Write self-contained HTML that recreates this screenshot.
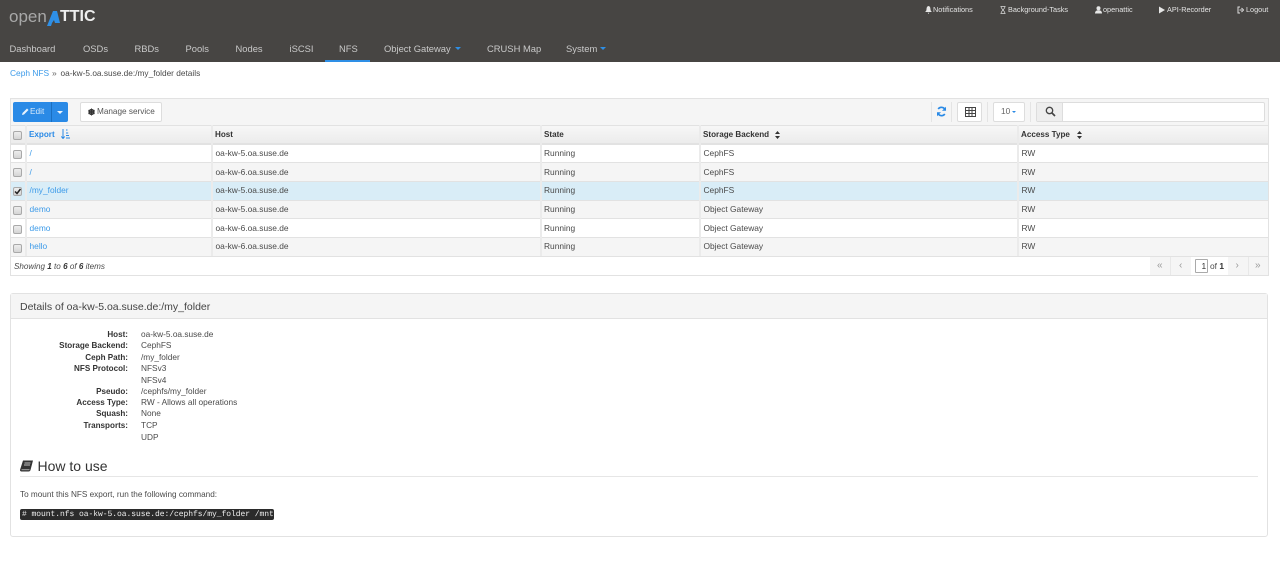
<!DOCTYPE html>
<html><head><meta charset="utf-8">
<style>
html,body{margin:0;padding:0;width:1280px;height:565px;overflow:hidden;background:#fff}
body{font-family:"Liberation Sans",sans-serif;font-size:8.4px;color:#4a4a4a;position:relative;filter:blur(.25px)}
.a,.t{position:absolute}
.t{white-space:nowrap;line-height:12px;height:12px}
.nav{font-size:9.4px;color:#c9c9c9;top:43px}
.top{font-size:7.3px;color:#e4e4e4;top:4px}
.lnk{color:#3d9be9}
.h{font-weight:bold;color:#333;font-size:8.1px}
.cb{position:absolute;left:13px;width:7px;height:7px;border:1px solid #a9a9a9;border-radius:2px;background:linear-gradient(#eee,#d5d5d5)}
.v{position:absolute;top:125px;width:2px;height:131px;background:#ebebeb}
.hl{position:absolute;left:11px;width:1257px;height:1px;background:#e2e2e2}
.row{position:absolute;left:11px;width:1257px}
.lab{font-weight:bold;color:#333;right:1152px;font-size:8.1px}
.val{left:141px;font-size:8.3px;color:#4a4a4a}
.btn{position:absolute;background:#fff;border:1px solid #ddd;border-radius:2px;box-sizing:border-box}
.sep{position:absolute;top:102px;width:1px;height:20px;background:#e4e4e4}
.pg{color:#999;font-size:10px}
</style></head><body>

<div class="a" style="left:0;top:0;width:1280px;height:62px;background:#474543"></div>
<div class="t" style="left:9px;top:7px;height:20px;line-height:20px;font-size:17px;color:#a8a8a8">open</div>
<svg class="a" style="left:46px;top:10px" width="16" height="17" viewBox="0 0 16 17"><path d="M1 16L7 1H11L14 13H9L8 10L6 13L5 16Z" fill="#2e8fe6"/></svg>
<div class="t" style="left:60px;top:7px;height:20px;line-height:20px;font-size:16px;font-weight:bold;color:#eee">TTIC</div>

<svg class="a" style="left:925px;top:6px" width="7" height="8" viewBox="0 0 7 8"><path d="M3.500 0C1.700.4 1.600 2 1.500 3.500 1.400 5 .6 5.500 0 6H7C6.400 5.500 5.600 5 5.500 3.500 5.400 2 5.300.4 3.500 0ZM2.700 6.700h1.600L3.500 8Z" fill="#e6e6e6"/></svg>
<div class="t top" style="left:933px">Notifications</div>
<svg class="a" style="left:1000px;top:6px" width="6" height="8" viewBox="0 0 6 8"><path d="M.5.500h5M.5 7.500h5M1 .5C1 3 5 5 5 7.500M5 .5C5 3 1 5 1 7.500" stroke="#ddd" stroke-width=".7" fill="none"/></svg>
<div class="t top" style="left:1008px">Background-Tasks</div>
<svg class="a" style="left:1095px;top:6px" width="7" height="8" viewBox="0 0 7 8"><circle cx="3.500" cy="2.200" r="2" fill="#e6e6e6"/><path d="M0 7.500C0 5 1.500 4.200 3.500 4.200S7 5 7 7.500Z" fill="#e6e6e6"/></svg>
<div class="t top" style="left:1103px">openattic</div>
<svg class="a" style="left:1159px;top:6px" width="6" height="8" viewBox="0 0 6 8"><path d="M0 .5L6 4 0 7.500Z" fill="#e6e6e6"/></svg>
<div class="t top" style="left:1167px">API-Recorder</div>
<svg class="a" style="left:1237px;top:6px" width="7" height="8" viewBox="0 0 7 8"><path d="M3 1H1V7H3M2.500 4H5M4.500 2L6.500 4 4.500 6" stroke="#ddd" stroke-width="1" fill="none"/></svg>
<div class="t top" style="left:1246px">Logout</div>

<div class="t nav" style="left:9.500px">Dashboard</div>
<div class="t nav" style="left:83px">OSDs</div>
<div class="t nav" style="left:134.500px">RBDs</div>
<div class="t nav" style="left:185.500px">Pools</div>
<div class="t nav" style="left:235.500px">Nodes</div>
<div class="t nav" style="left:289.500px">iSCSI</div>
<div class="t nav" style="left:339px">NFS</div>
<div class="a" style="left:325px;top:60px;width:45px;height:2px;background:#2e8fe6"></div>
<div class="t nav" style="left:384px">Object Gateway</div>
<div class="a" style="left:454.500px;top:47px;border:3px solid transparent;border-top:3px solid #2e8fe6"></div>
<div class="t nav" style="left:487px">CRUSH Map</div>
<div class="t nav" style="left:566px">System</div>
<div class="a" style="left:600px;top:47px;border:3px solid transparent;border-top:3px solid #2e8fe6"></div>

<div class="t lnk" style="left:10px;top:67px;font-size:8.400px">Ceph NFS</div>
<div class="t" style="left:52px;top:67px;font-size:8.500px;color:#666">»</div>
<div class="t" style="left:60.500px;top:67px;font-size:8.300px">oa-kw-5.oa.suse.de:/my_folder details</div>

<div class="a" style="left:10px;top:98px;width:1257px;height:176px;border:1px solid #e2e2e2;background:#fff"></div>
<div class="a" style="left:11px;top:99px;width:1257px;height:26px;background:#f5f5f5"></div>

<div class="a" style="left:13px;top:102px;width:55px;height:20px;background:#2a8ae6;border-radius:2px"></div>
<div class="a" style="left:51px;top:102px;width:1px;height:20px;background:#1b6fc0"></div>
<svg class="a" style="left:22px;top:108px" width="7" height="7" viewBox="0 0 7 7"><path d="M0 7L.5 5 5 .5 6.500 2 2 6.500Z" fill="#e8f2fc"/></svg>
<div class="t" style="left:30px;top:105px;font-size:8.300px;color:#d8eafa">Edit</div>
<div class="a" style="left:57px;top:111px;border:3px solid transparent;border-top:3px solid #e8f2fc"></div>
<div class="btn" style="left:80px;top:102px;width:82px;height:20px"></div>
<svg class="a" style="left:88px;top:107.500px" width="7" height="8" viewBox="0 0 7 8"><circle cx="3.500" cy="4" r="2.300" fill="none" stroke="#333" stroke-width="1.600"/><path d="M3.500.5V7.500M.4 2.200L6.600 5.800M.4 5.800L6.600 2.200" stroke="#333" stroke-width="1"/></svg>
<div class="t" style="left:97px;top:106px;font-size:8.200px;color:#555">Manage service</div>

<div class="sep" style="left:931px"></div><div class="sep" style="left:951px"></div>
<svg class="a" style="left:936px;top:106px" width="11" height="11" viewBox="0 0 11 11"><path d="M9.300 4.300A4 4 0 0 0 2.200 3M1.700 6.700A4 4 0 0 0 8.800 8" stroke="#2a8ae6" stroke-width="1.700" fill="none"/><path d="M10 .8V4.800H6ZM1 10.200V6.200H5Z" fill="#2a8ae6"/></svg>
<div class="btn" style="left:957px;top:102px;width:25px;height:20px"></div>
<svg class="a" style="left:964.500px;top:107px" width="11" height="10" viewBox="0 0 11 10"><path d="M.5.500h10v9H.5zM.5 3.500h10M.5 6.500h10M4 .5v9M7 .5v9" fill="none" stroke="#444" stroke-width="1"/></svg>
<div class="sep" style="left:987px"></div>
<div class="btn" style="left:993px;top:102px;width:32px;height:20px"></div>
<div class="t" style="left:1001px;top:105px;font-size:8.300px;color:#666">10</div>
<div class="a" style="left:1012px;top:110.500px;border:2.500px solid transparent;border-top:2.500px solid #2a8ae6"></div>
<div class="sep" style="left:1030px"></div>
<div class="btn" style="left:1036px;top:102px;width:229px;height:20px;border-color:#ddd"></div>
<div class="a" style="left:1037px;top:103px;width:26px;height:18px;background:#eee;border-right:1px solid #ddd;box-sizing:border-box"></div>
<svg class="a" style="left:1045px;top:106px" width="11" height="11" viewBox="0 0 11 11"><circle cx="4.500" cy="4.500" r="3.200" fill="none" stroke="#444" stroke-width="1.300"/><path d="M7 7L10 10" stroke="#444" stroke-width="1.700"/></svg>

<div class="a" style="left:11px;top:125px;width:1257px;height:19px;background:linear-gradient(#f7f7f7,#ebebeb)"></div>
<div class="row" style="top:144px;height:19px;background:#fff"></div>
<div class="row" style="top:163px;height:18px;background:#f5f5f5"></div>
<div class="row" style="top:181px;height:19px;background:#d9edf7"></div>
<div class="row" style="top:200px;height:19px;background:#f5f5f5"></div>
<div class="row" style="top:219px;height:18px;background:#fff"></div>
<div class="row" style="top:237px;height:19px;background:#f5f5f5"></div>

<div class="hl" style="top:125px"></div>
<div class="hl" style="top:143px;height:2px"></div>
<div class="hl" style="top:162px"></div>
<div class="hl" style="top:181px"></div>
<div class="hl" style="top:200px"></div>
<div class="hl" style="top:218px"></div>
<div class="hl" style="top:237px"></div>
<div class="hl" style="top:256px"></div>
<div class="v" style="left:25px"></div><div class="v" style="left:211px"></div><div class="v" style="left:540px"></div><div class="v" style="left:699px"></div><div class="v" style="left:1017px"></div>

<div class="cb" style="top:131px"></div>
<div class="cb" style="top:150px"></div>
<div class="cb" style="top:168px"></div>
<div class="cb" style="top:187px"></div>
<svg class="a" style="left:14px;top:187.500px" width="7" height="7" viewBox="0 0 7 7"><path d="M1 3.500L3 5.500 6.500 1" fill="none" stroke="#222" stroke-width="1.500"/></svg>
<div class="cb" style="top:206px"></div>
<div class="cb" style="top:225px"></div>
<div class="cb" style="top:244px"></div>

<div class="t lnk" style="left:29px;top:129px;font-weight:bold;color:#2a8ae6;font-size:8.100px">Export</div>
<svg class="a" style="left:61px;top:129px" width="9" height="10" viewBox="0 0 9 10"><path d="M2 0V9M.3 7.500L2 9.500 3.700 7.500" fill="none" stroke="#2a8ae6" stroke-width="1"/><path d="M5 1h1.500M5 4h2.200M5 6.500h3M5 9h4" stroke="#2a8ae6" stroke-width="1"/></svg>
<div class="t h" style="left:215px;top:129px">Host</div>
<div class="t h" style="left:544px;top:129px">State</div>
<div class="t h" style="left:703px;top:129px">Storage Backend</div>
<svg class="a" style="left:775px;top:130.500px" width="5" height="8" viewBox="0 0 5 8"><path d="M2.500 0L5 3H0ZM2.500 8L5 5H0Z" fill="#333"/></svg>
<div class="t h" style="left:1021px;top:129px">Access Type</div>
<svg class="a" style="left:1077px;top:130.500px" width="5" height="8" viewBox="0 0 5 8"><path d="M2.500 0L5 3H0ZM2.500 8L5 5H0Z" fill="#333"/></svg>

<div class="t lnk" style="left:29.500px;top:147px">/</div><div class="t" style="left:215.500px;top:147px">oa-kw-5.oa.suse.de</div><div class="t" style="left:544px;top:147px">Running</div><div class="t" style="left:703.500px;top:147px">CephFS</div><div class="t" style="left:1021.500px;top:147px">RW</div>
<div class="t lnk" style="left:29.500px;top:166px">/</div><div class="t" style="left:215.500px;top:166px">oa-kw-6.oa.suse.de</div><div class="t" style="left:544px;top:166px">Running</div><div class="t" style="left:703.500px;top:166px">CephFS</div><div class="t" style="left:1021.500px;top:166px">RW</div>
<div class="t lnk" style="left:29.500px;top:184px">/my_folder</div><div class="t" style="left:215.500px;top:184px">oa-kw-5.oa.suse.de</div><div class="t" style="left:544px;top:184px">Running</div><div class="t" style="left:703.500px;top:184px">CephFS</div><div class="t" style="left:1021.500px;top:184px">RW</div>
<div class="t lnk" style="left:29.500px;top:203px">demo</div><div class="t" style="left:215.500px;top:203px">oa-kw-5.oa.suse.de</div><div class="t" style="left:544px;top:203px">Running</div><div class="t" style="left:703.500px;top:203px">Object Gateway</div><div class="t" style="left:1021.500px;top:203px">RW</div>
<div class="t lnk" style="left:29.500px;top:222px">demo</div><div class="t" style="left:215.500px;top:222px">oa-kw-6.oa.suse.de</div><div class="t" style="left:544px;top:222px">Running</div><div class="t" style="left:703.500px;top:222px">Object Gateway</div><div class="t" style="left:1021.500px;top:222px">RW</div>
<div class="t lnk" style="left:29.500px;top:240px">hello</div><div class="t" style="left:215.500px;top:240px">oa-kw-6.oa.suse.de</div><div class="t" style="left:544px;top:240px">Running</div><div class="t" style="left:703.500px;top:240px">Object Gateway</div><div class="t" style="left:1021.500px;top:240px">RW</div>

<div class="t" style="left:14px;top:260.600px;font-style:italic;font-size:8.100px">Showing <b style="color:#333">1</b> to <b style="color:#333">6</b> of <b style="color:#333">6</b> items</div>

<div class="a" style="left:1150px;top:257px;width:41px;height:18px;background:#f5f5f5"></div>
<div class="a" style="left:1170px;top:257px;width:1px;height:18px;background:#e8e8e8"></div>
<div class="a" style="left:1228px;top:257px;width:40px;height:18px;background:#f5f5f5"></div>
<div class="a" style="left:1248px;top:257px;width:1px;height:18px;background:#e8e8e8"></div>
<div class="t pg" style="left:1157px;top:260px">«</div>
<div class="t pg" style="left:1179px;top:260px">‹</div>
<div class="t pg" style="left:1235.500px;top:260px">›</div>
<div class="t pg" style="left:1255px;top:260px">»</div>
<div class="a" style="left:1195px;top:259px;width:11px;height:12px;border:1px solid #aaa;border-radius:1px;background:#fff"></div>
<div class="t" style="left:1201.500px;top:260px;color:#333">1</div>
<div class="t" style="left:1210px;top:260px">of <b style="color:#333">1</b></div>

<div class="a" style="left:10px;top:293px;width:1258px;height:244px;border:1px solid #e2e2e2;border-radius:3px;box-sizing:border-box;background:#fff"></div>
<div class="a" style="left:11px;top:294px;width:1256px;height:24px;background:#f5f5f5;border-bottom:1px solid #e2e2e2"></div>
<div class="t" style="left:20px;top:299.500px;height:14px;line-height:14px;font-size:10.500px;color:#444">Details of oa-kw-5.oa.suse.de:/my_folder</div>

<div class="t lab" style="top:329px">Host:</div><div class="t val" style="top:328px">oa-kw-5.oa.suse.de</div>
<div class="t lab" style="top:340px">Storage Backend:</div><div class="t val" style="top:339px">CephFS</div>
<div class="t lab" style="top:352px">Ceph Path:</div><div class="t val" style="top:351px">/my_folder</div>
<div class="t lab" style="top:363px">NFS Protocol:</div><div class="t val" style="top:362px">NFSv3</div>
<div class="t val" style="top:374px">NFSv4</div>
<div class="t lab" style="top:386px">Pseudo:</div><div class="t val" style="top:385px">/cephfs/my_folder</div>
<div class="t lab" style="top:397px">Access Type:</div><div class="t val" style="top:396px">RW - Allows all operations</div>
<div class="t lab" style="top:408px">Squash:</div><div class="t val" style="top:407px">None</div>
<div class="t lab" style="top:420px">Transports:</div><div class="t val" style="top:419px">TCP</div>
<div class="t val" style="top:431px">UDP</div>

<svg class="a" style="left:20px;top:460px" width="13" height="12" viewBox="0 0 13 12"><path d="M3 .5H13L10.500 10C10.300 11 9.500 11.500 8.500 11.500H1.500C.5 11.500 0 10.800 0 10L3 .5Z" fill="#333"/><path d="M4.500 3H10.500M4 5H10M1.500 9.800H9.500" stroke="#eee" stroke-width=".7"/></svg>
<div class="t" style="left:37.500px;top:457px;height:18px;line-height:18px;font-size:14px;color:#333">How to use</div>
<div class="a" style="left:20px;top:476px;width:1238px;height:1px;background:#e6e6e6"></div>
<div class="t" style="left:20px;top:489px;font-size:8.200px">To mount this NFS export, run the following command:</div>
<div class="a" style="left:20px;top:509px;width:254px;height:11px;background:#2b2b2b;border-radius:2px"></div>
<div class="t" style="left:22px;top:508.500px;font-family:'Liberation Mono',monospace;font-size:8px;letter-spacing:-.05px;color:#eee;text-rendering:geometricPrecision"># mount.nfs oa-kw-5.oa.suse.de:/cephfs/my_folder /mnt</div>

</body></html>
